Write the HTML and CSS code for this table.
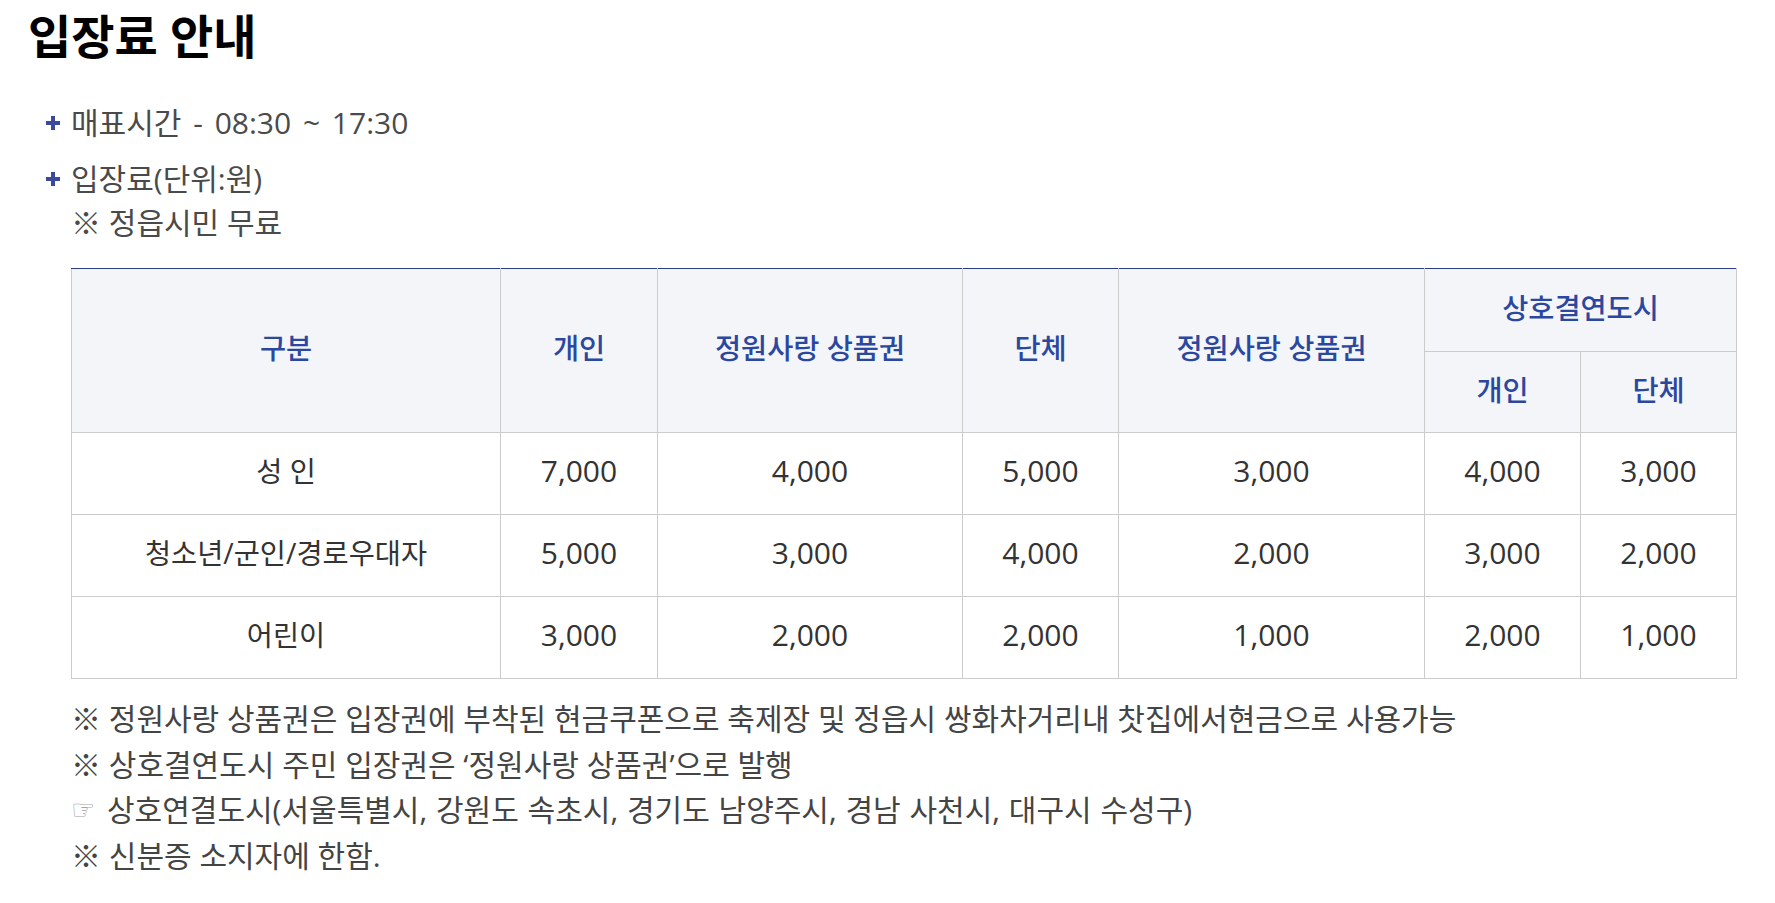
FILE: index.html
```html
<!DOCTYPE html>
<html lang="ko">
<head>
<meta charset="utf-8">
<title>입장료 안내</title>
<link rel="stylesheet" href="styles.css">
</head>
<body>
<div class="page">
  <h1 class="title">입장료 안내</h1>
  <ul class="info">
    <li class="info-item">
      <span class="plus"><svg width="14" height="14" viewBox="0 0 14 14"><rect x="5" y="0" width="4" height="14" fill="#3a4a9c"/><rect x="0" y="5" width="14" height="4" fill="#3a4a9c"/></svg></span>
      <div class="info-text wide">매표시간 - 08:30 ~ 17:30</div>
    </li>
    <li class="info-item">
      <span class="plus"><svg width="14" height="14" viewBox="0 0 14 14"><rect x="5" y="0" width="4" height="14" fill="#3a4a9c"/><rect x="0" y="5" width="14" height="4" fill="#3a4a9c"/></svg></span>
      <div class="info-text">입장료(단위:원)<br>※ 정읍시민 무료</div>
    </li>
  </ul>
  <div class="content">
    <table class="fee">
      <colgroup>
        <col class="c1"><col class="c2"><col class="c3"><col class="c4"><col class="c5"><col class="c6"><col class="c7">
      </colgroup>
      <thead>
        <tr class="h1row">
          <th rowspan="2">구분</th>
          <th rowspan="2">개인</th>
          <th rowspan="2">정원사랑 상품권</th>
          <th rowspan="2">단체</th>
          <th rowspan="2">정원사랑 상품권</th>
          <th colspan="2">상호결연도시</th>
        </tr>
        <tr class="h2row">
          <th>개인</th>
          <th>단체</th>
        </tr>
      </thead>
      <tbody>
        <tr><td class="kr">성 인</td><td>7,000</td><td>4,000</td><td>5,000</td><td>3,000</td><td>4,000</td><td>3,000</td></tr>
        <tr><td class="kr">청소년/군인/경로우대자</td><td>5,000</td><td>3,000</td><td>4,000</td><td>2,000</td><td>3,000</td><td>2,000</td></tr>
        <tr><td class="kr">어린이</td><td>3,000</td><td>2,000</td><td>2,000</td><td>1,000</td><td>2,000</td><td>1,000</td></tr>
      </tbody>
    </table>
    <ul class="notes">
      <li><span class="mark">※</span> 정원사랑 상품권은 입장권에 부착된 현금쿠폰으로 축제장 및 정읍시 쌍화차거리내 찻집에서현금으로 사용가능</li>
      <li><span class="mark">※</span> 상호결연도시 주민 입장권은 ‘정원사랑 상품권’으로 발행</li>
      <li class="spaced"><span class="hand">☞</span>상호연결도시(서울특별시, 강원도 속초시, 경기도 남양주시, 경남 사천시, 대구시 수성구)</li>
      <li><span class="mark">※</span> 신분증 소지자에 한함.</li>
    </ul>
  </div>
</div>
</body>
</html>
```

FILE: styles.css
```css
html, body {
  margin: 0;
  padding: 0;
  background: #fff;
}
body {
  font-family: "Open Sans", "Noto Sans CJK KR", sans-serif;
  color: #444;
}
.page {
  padding: 8px 0 0 28px;
}
.title {
  margin: 0;
  font-size: 47px;
  line-height: 56px;
  font-weight: 700;
  color: #000;
}
.info {
  list-style: none;
  margin: 37px 0 0 18px;
  padding: 0;
}
.info-item {
  display: flex;
  align-items: flex-start;
  margin-bottom: 12px;
}
.info-item:last-child {
  margin-bottom: 0;
}
.plus {
  width: 25px;
  flex: none;
  display: flex;
  align-items: center;
  height: 44px;
}
.plus svg {
  display: block;
}
.info-text {
  font-size: 30px;
  line-height: 44px;
  color: #4a4a4a;
}
.info-text.wide {
  word-spacing: 4px;
}
.content {
  margin: 23px 0 0 43px;
}
.fee {
  border-collapse: collapse;
  table-layout: fixed;
  width: 1665px;
  border-top: 1px solid #2a3c8c;
}
.c1 { width: 429px; }
.c2 { width: 157px; }
.c3 { width: 305px; }
.c4 { width: 156px; }
.c5 { width: 306px; }
.c6 { width: 156px; }
.c7 { width: 156px; }
.fee th, .fee td {
  border: 1px solid #cccccc;
  padding: 0;
  text-align: center;
  font-size: 30px;
  line-height: 40px;
}
.fee tr:first-child th {
  border-top: 1px solid #2a3c8c;
}
.fee th {
  background: #f4f5f9;
  color: #2b48a0;
  font-weight: 500;
  font-size: 28.4px;
  padding-bottom: 5px;
}
.h1row th { height: 77px; }
.h2row th { height: 75px; }
.fee td {
  height: 75px;
  padding-bottom: 6px;
  color: #333;
}
.fee td.kr {
  font-size: 28.4px;
}
.notes {
  list-style: none;
  margin: 17px 0 0 0;
  padding: 0;
}
.notes li {
  font-size: 30px;
  line-height: 45.5px;
  color: #444;
  white-space: nowrap;
}
.notes li.spaced {
  word-spacing: 1px;
}
.mark {
  color: #444;
}
.hand {
  display: inline-block;
  width: 36px;
  font-family: "DejaVu Sans", sans-serif;
  font-size: 27px;
  color: #a5a5a5;
  vertical-align: top;
}
```
